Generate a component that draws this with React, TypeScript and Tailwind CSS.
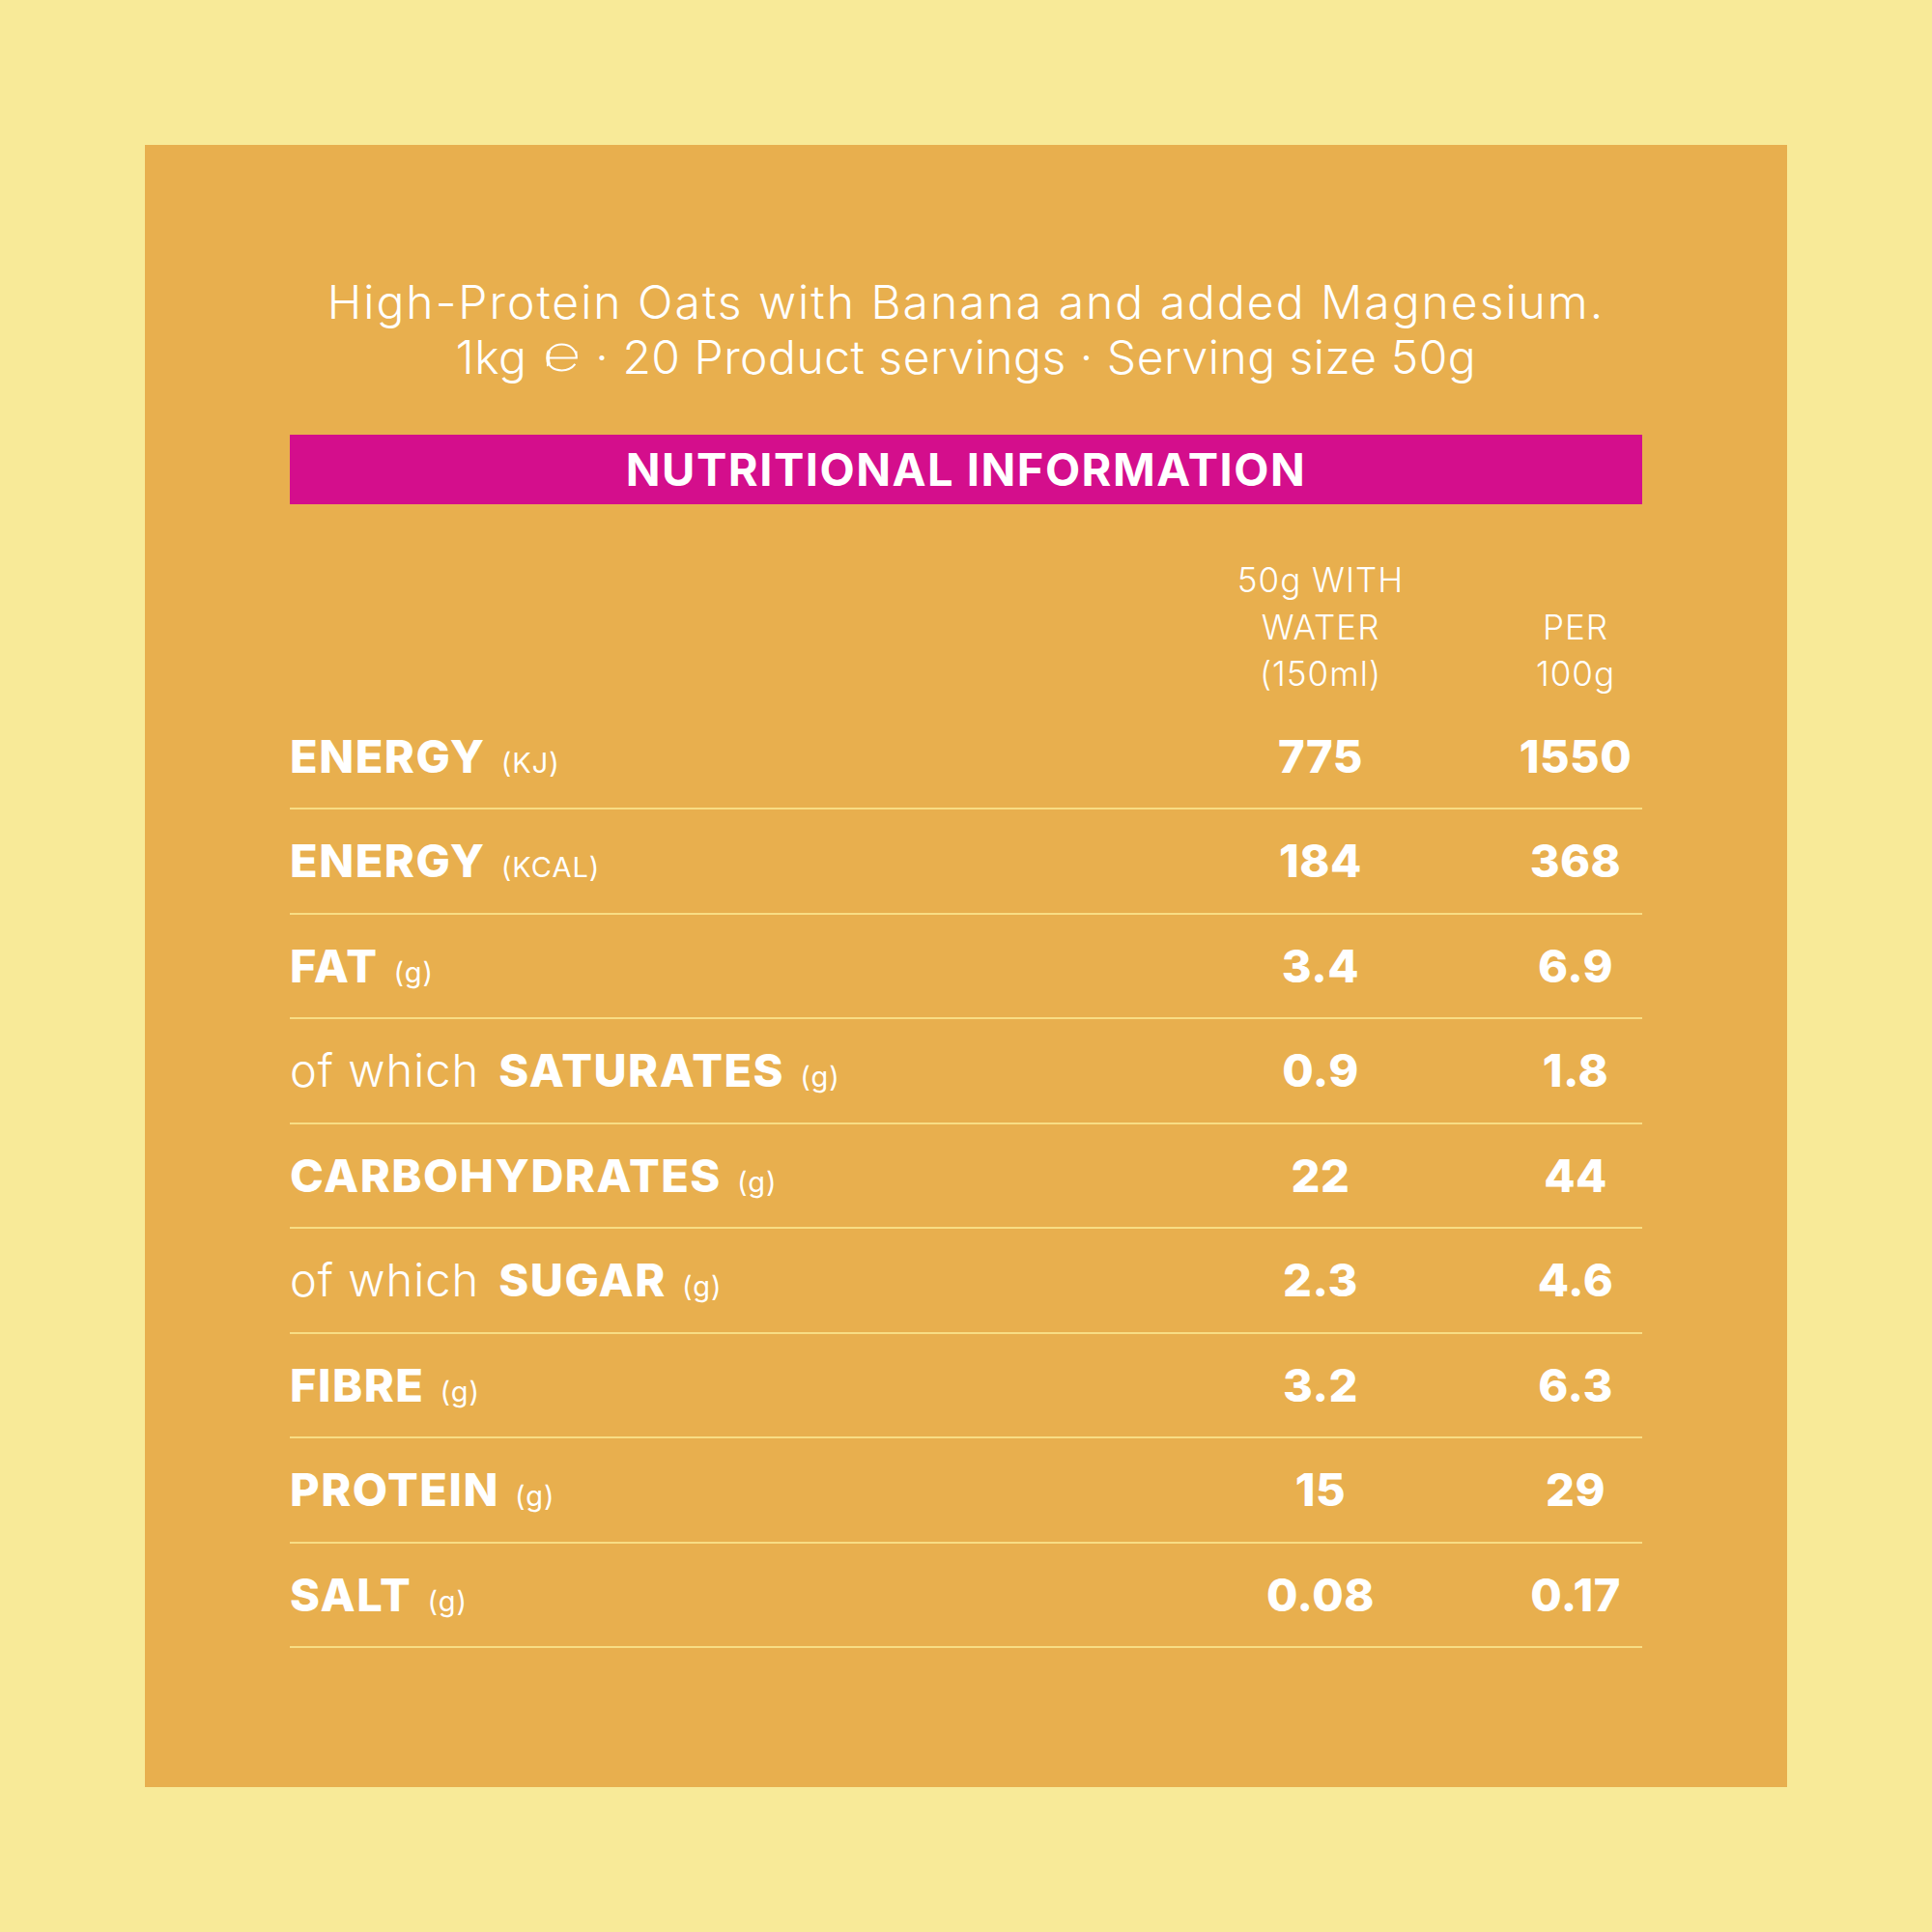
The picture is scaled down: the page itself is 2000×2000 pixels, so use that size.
import React from "react";

interface Nutrient {
  prefix?: string;
  name: string;
  unit: string;
  serving: string;
  per100: string;
}

const nutrients: Nutrient[] = [
  { name: "ENERGY", unit: "(KJ)", serving: "775", per100: "1550" },
  { name: "ENERGY", unit: "(KCAL)", serving: "184", per100: "368" },
  { name: "FAT", unit: "(g)", serving: "3.4", per100: "6.9" },
  { prefix: "of which", name: "SATURATES", unit: "(g)", serving: "0.9", per100: "1.8" },
  { name: "CARBOHYDRATES", unit: "(g)", serving: "22", per100: "44" },
  { prefix: "of which", name: "SUGAR", unit: "(g)", serving: "2.3", per100: "4.6" },
  { name: "FIBRE", unit: "(g)", serving: "3.2", per100: "6.3" },
  { name: "PROTEIN", unit: "(g)", serving: "15", per100: "29" },
  { name: "SALT", unit: "(g)", serving: "0.08", per100: "0.17" },
];

// the little "estimated" e mark after the weight
const EstimatedSign = () => (
  <svg viewBox="0 0 40 32" className="w-[37px] h-[30px] ml-[18px] mr-[16px] inline-block" fill="none" stroke="currentColor">
    <path d="M4 16.5 H36.5 C36.5 7.5 29.5 1.5 20 1.5 C10.5 1.5 4 8 4 16.5 C4 25 10.5 30.5 20 30.5 C27 30.5 32 27.5 35 23.5" strokeWidth={2.2} />
    <path d="M6 8.5 C4 12 4 21 6 24.5" strokeWidth={4} />
    <path d="M4 16.5 V26" strokeWidth={1.6} />
    <path d="M36.5 16.5 V9" strokeWidth={1.6} />
  </svg>
);

const NutritionRow = ({ row }: { row: Nutrient }) => (
  <div className="flex items-center h-[108.5px] border-b-2 border-[#f8dd84]">
    <div className="flex-1 flex items-baseline">
      {row.prefix && (
        <span className="text-[47px] font-light tracking-[1px] mr-[20px]">{row.prefix}</span>
      )}
      <span className="text-[47px] font-extrabold tracking-[1.5px]">{row.name}</span>
      <span className="text-[29px] font-normal tracking-[1px] ml-[16px]">{row.unit}</span>
    </div>
    <div className="w-[200px] text-center text-[47px] font-extrabold tracking-[0.5px]">{row.serving}</div>
    <div className="w-[138px] ml-[95px] text-center text-[47px] font-extrabold tracking-[0.5px]">{row.per100}</div>
  </div>
);

export default function App() {
  return (
    <div className="w-[2000px] h-[2000px] bg-[#f8ea98] p-[150px] font-['Inter',sans-serif] text-white">
      <div className="w-full h-full bg-[#e8af4e] pt-[134px] px-[150px]">
        <div className="text-center font-light text-[48px] leading-[57px]">
          <p className="tracking-[2px]">High-Protein Oats with Banana and added Magnesium.</p>
          <p className="flex items-center justify-center tracking-[0.5px]">
            <span>1kg</span>
            <EstimatedSign />
            <span>· 20 Product servings · Serving size 50g</span>
          </p>
        </div>

        <div className="mt-[52px] h-[72px] bg-[#d40e8c] flex items-center justify-center">
          <h2 className="text-[47px] font-bold tracking-[1.5px]">NUTRITIONAL INFORMATION</h2>
        </div>

        <div className="mt-[54px] flex items-end">
          <div className="flex-1" />
          <div className="w-[200px] text-center text-[35px] font-light leading-[48.5px] tracking-[1px]">
            50g WITH
            <br />
            WATER
            <br />
            (150ml)
          </div>
          <div className="w-[138px] ml-[95px] text-center text-[35px] font-light leading-[48.5px] tracking-[1px]">
            PER
            <br />
            100g
          </div>
        </div>

        <div className="mt-[8px]">
          {nutrients.map((row, i) => (
            <NutritionRow key={i} row={row} />
          ))}
        </div>
      </div>
    </div>
  );
}
